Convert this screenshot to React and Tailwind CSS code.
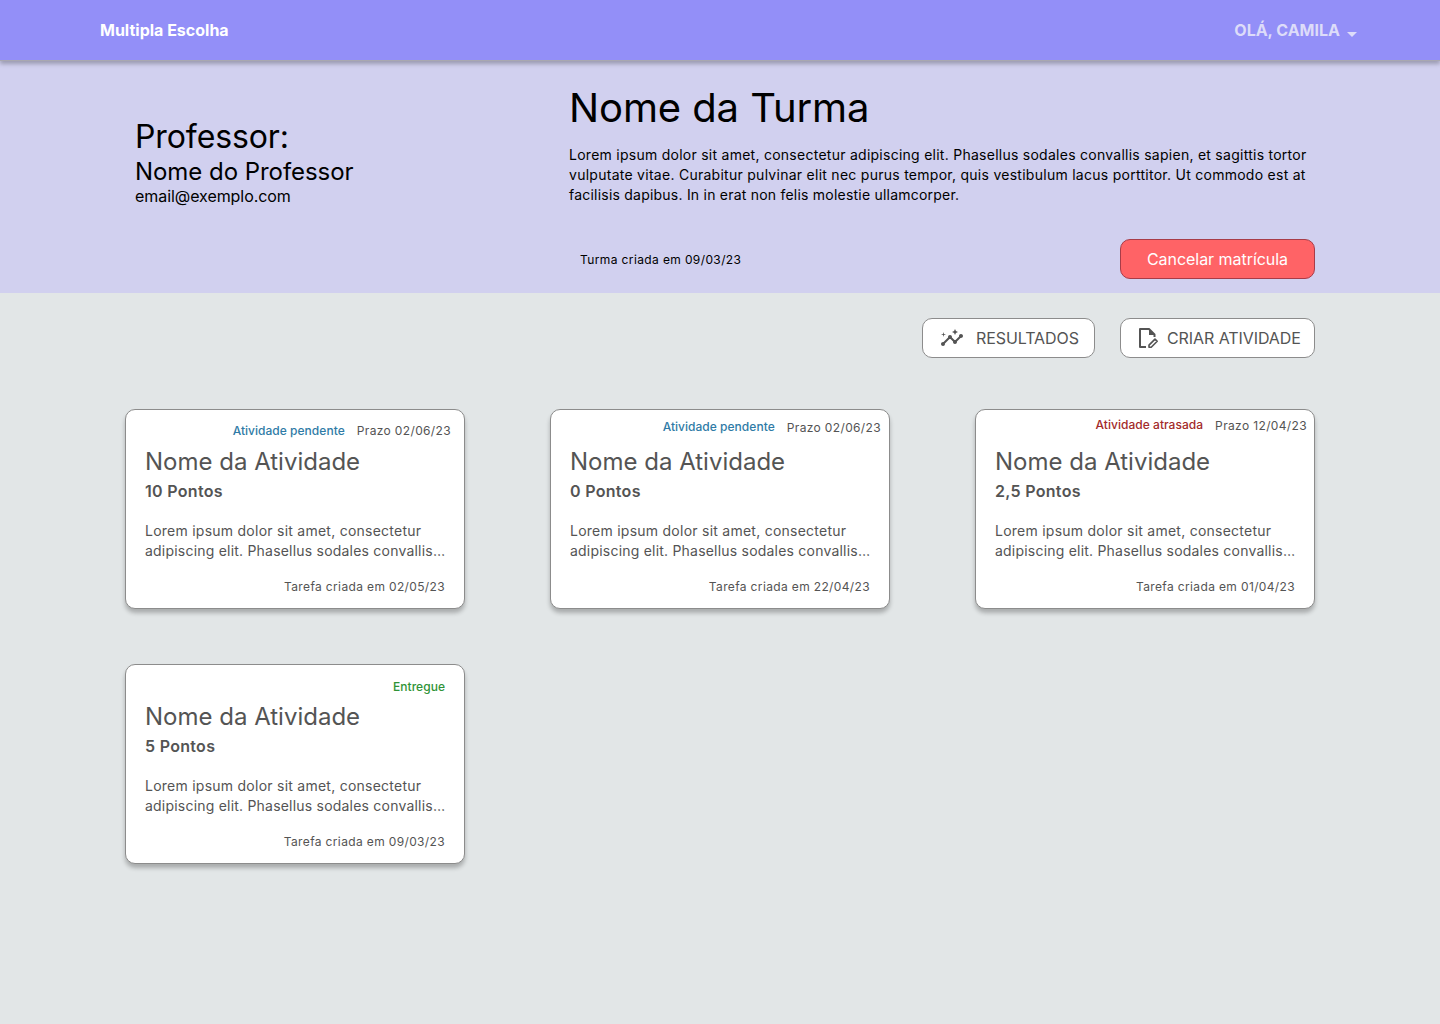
import React from "react";
import { MdInsights } from "react-icons/md";

const activities = [
  {
    status: "Atividade pendente", due: "Prazo 02/06/23", points: "10 Pontos", created: "Tarefa criada em 02/05/23",
    statusClass: "text-[#2f7ba6]", headClass: "pt-[13px] pr-[13px]",
  },
  {
    status: "Atividade pendente", due: "Prazo 02/06/23", points: "0 Pontos", created: "Tarefa criada em 22/04/23",
    statusClass: "text-[#2f7ba6]", headClass: "pt-[9px] pr-[8px]", dueClass: "mt-px",
  },
  {
    status: "Atividade atrasada", due: "Prazo 12/04/23", points: "2,5 Pontos", created: "Tarefa criada em 01/04/23",
    statusClass: "text-[#a32a2a]", headClass: "pt-[7px] pr-[7px]", dueClass: "mt-px",
  },
  {
    status: "Entregue", points: "5 Pontos", created: "Tarefa criada em 09/03/23",
    statusClass: "text-[#2f9337]", headClass: "pt-[14px] pr-[19px]",
  },
];

function EditDocumentIcon() {
  return (
    <svg width="24" height="24" viewBox="0 0 24 24" fill="none">
      <path d="M10 21H4V3h9l5.500 5.500V11" stroke="#545454" strokeWidth="2" strokeLinejoin="round" />
      <path d="M13 3v6h6z" fill="#545454" />
      <path d="M13 21.300v-2.200l6-6 2.200 2.200-6 6z" stroke="#545454" strokeWidth="1.600" strokeLinejoin="round" />
    </svg>
  );
}

function ActivityCard({ activity }) {
  return (
    <article className="flex h-[200px] w-[340px] flex-col rounded-[10px] border border-[#8c8c8c] bg-white text-[#545454] shadow-[0_4px_4px_rgba(0,0,0,0.25)]">
      <div className={`flex h-[36px] justify-end gap-3 text-xs leading-4 ${activity.headClass}`}>
        <span className={`font-medium tracking-[0.03px] ${activity.statusClass}`}>{activity.status}</span>
        {activity.due && <span className={`tracking-[0.36px] ${activity.dueClass || ""}`}>{activity.due}</span>}
      </div>
      <div className="flex flex-1 flex-col px-[19px]">
        <h2 className="text-2xl leading-8">Nome da Atividade</h2>
        <p className="mt-px text-base leading-6 font-semibold tracking-[0.3px]">{activity.points}</p>
        <p className="mt-[18px] text-sm leading-5 tracking-[0.25px] whitespace-nowrap">
          Lorem ipsum dolor sit amet, consectetur<br />
          <span className="tracking-[0.21px]">adipiscing elit. Phasellus sodales convallis…</span>
        </p>
        <p className="mt-[18px] text-right text-xs leading-4 tracking-[0.36px]">{activity.created}</p>
      </div>
    </article>
  );
}

export default function App() {
  return (
    <div className="min-h-[1024px] w-[1440px] bg-[#e2e6e7] font-['Inter',sans-serif] text-black">
      <header className="relative flex h-[60px] items-center justify-between bg-[#938ff8] pr-[83px] pl-[100px] text-base font-bold shadow-[0_1px_0_#a9a8b0,0_4px_4px_rgba(0,0,0,0.25)]">
        <span className="text-white">Multipla Escolha</span>
        <button className="flex items-center gap-[7px] font-bold text-[#dddcf9]">
          OLÁ, CAMILA
          <svg className="mt-2" width="10" height="5" viewBox="0 0 10 5" fill="currentColor"><path d="M0 0h10L5 5z" /></svg>
        </button>
      </header>

      <section className="flex h-[233px] bg-[#d1d0ef]">
        <div className="w-[569px] pt-[57px] pl-[135px]">
          <p className="text-[32px] leading-[40px] tracking-[-0.1px]">Professor:</p>
          <p className="text-2xl leading-[30px] tracking-[-0.05px]">Nome do Professor</p>
          <p className="-mt-px text-base leading-5 tracking-[-0.06px]">email@exemplo.com</p>
        </div>
        <div className="flex w-[746px] flex-col pt-[22px]">
          <h1 className="text-[40px] leading-[52px] tracking-[-0.1px]">Nome da Turma</h1>
          <p className="mt-[11px] text-sm leading-5 tracking-[0.25px] whitespace-nowrap">
            <span className="tracking-[0.26px]">Lorem ipsum dolor sit amet, consectetur adipiscing elit. Phasellus sodales convallis sapien, et sagittis tortor</span><br />
            <span className="tracking-[0.268px]">vulputate vitae. Curabitur pulvinar elit nec purus tempor, quis vestibulum lacus porttitor. Ut commodo est at</span><br />
            <span className="tracking-[0.22px]">facilisis dapibus. In in erat non felis molestie ullamcorper.</span>
          </p>
          <div className="mt-[34px] flex items-center justify-between pl-[11px]">
            <span className="mt-px text-xs tracking-[0.38px]">Turma criada em 09/03/23</span>
            <button className="h-10 w-[195px] rounded-[10px] border border-[#a83c48] bg-[#ff6366] text-base tracking-[-0.04px] text-white">
              Cancelar matrícula
            </button>
          </div>
        </div>
      </section>

      <main className="px-[125px] pt-[25px]">
        <div className="flex justify-end gap-[25px] text-base tracking-[-0.08px] text-[#545454]">
          <button className="flex h-10 w-[173px] items-center gap-3 rounded-[10px] border border-[#8c8c8c] bg-white pl-[17px]">
            <MdInsights size={24} />
            RESULTADOS
          </button>
          <button className="flex h-10 w-[195px] items-center gap-[7px] rounded-[10px] border border-[#8c8c8c] bg-white pl-[15px]">
            <EditDocumentIcon />
            CRIAR ATIVIDADE
          </button>
        </div>
        <div className="mt-[51px] grid grid-cols-[340px_340px_340px] gap-x-[85px] gap-y-[55px]">
          {activities.map((activity, index) => (
            <ActivityCard key={index} activity={activity} />
          ))}
        </div>
      </main>
    </div>
  );
}
